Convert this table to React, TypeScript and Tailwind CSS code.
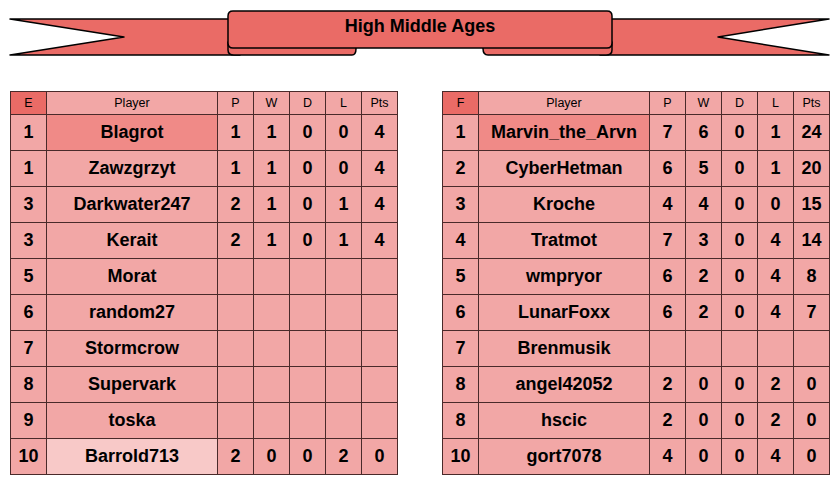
import React from "react";

type Row = {
  rank: string;
  name: string;
  stats: string[];
  tone?: "hot" | "pale";
};

const groupE: Row[] = [
  { rank: "1", name: "Blagrot", stats: ["1", "1", "0", "0", "4"], tone: "hot" },
  { rank: "1", name: "Zawzgrzyt", stats: ["1", "1", "0", "0", "4"] },
  { rank: "3", name: "Darkwater247", stats: ["2", "1", "0", "1", "4"] },
  { rank: "3", name: "Kerait", stats: ["2", "1", "0", "1", "4"] },
  { rank: "5", name: "Morat", stats: ["", "", "", "", ""] },
  { rank: "6", name: "random27", stats: ["", "", "", "", ""] },
  { rank: "7", name: "Stormcrow", stats: ["", "", "", "", ""] },
  { rank: "8", name: "Supervark", stats: ["", "", "", "", ""] },
  { rank: "9", name: "toska", stats: ["", "", "", "", ""] },
  { rank: "10", name: "Barrold713", stats: ["2", "0", "0", "2", "0"], tone: "pale" },
];

const groupF: Row[] = [
  { rank: "1", name: "Marvin_the_Arvn", stats: ["7", "6", "0", "1", "24"], tone: "hot" },
  { rank: "2", name: "CyberHetman", stats: ["6", "5", "0", "1", "20"] },
  { rank: "3", name: "Kroche", stats: ["4", "4", "0", "0", "15"] },
  { rank: "4", name: "Tratmot", stats: ["7", "3", "0", "4", "14"] },
  { rank: "5", name: "wmpryor", stats: ["6", "2", "0", "4", "8"] },
  { rank: "6", name: "LunarFoxx", stats: ["6", "2", "0", "4", "7"] },
  { rank: "7", name: "Brenmusik", stats: ["", "", "", "", ""] },
  { rank: "8", name: "angel42052", stats: ["2", "0", "0", "2", "0"] },
  { rank: "8", name: "hscic", stats: ["2", "0", "0", "2", "0"] },
  { rank: "10", name: "gort7078", stats: ["4", "0", "0", "4", "0"] },
];

const cell = "flex items-center justify-center border-r border-b border-[#4a2a2a]";

function GroupTable({ letter, rows }: { letter: string; rows: Row[] }) {
  return (
    <div className="grid w-[388px] grid-cols-[36px_171px_36px_36px_36px_36px_36px] border-l border-t border-[#4a2a2a] bg-[#f2a7a6]">
      {/* header */}
      <div className={`${cell} h-[23px] bg-[#ea6b66] text-[12.5px]`}>{letter}</div>
      {["Player", "P", "W", "D", "L", "Pts"].map((h) => (
        <div key={h} className={`${cell} h-[23px] text-[12.5px]`}>
          {h}
        </div>
      ))}

      {rows.map((r, i) => (
        <React.Fragment key={i}>
          <div className={`${cell} h-[36px] text-[18px] font-bold`}>{r.rank}</div>
          <div
            className={`${cell} h-[36px] text-[18px] font-bold ${
              r.tone === "hot" ? "bg-[#f08a87]" : r.tone === "pale" ? "bg-[#f8c9c8]" : ""
            }`}
          >
            {r.name}
          </div>
          {r.stats.map((s, j) => (
            <div key={j} className={`${cell} h-[36px] text-[18px] font-bold`}>
              {s}
            </div>
          ))}
        </React.Fragment>
      ))}
    </div>
  );
}

function Banner() {
  return (
    <div className="relative h-[91px]">
      <svg width="839" height="91" viewBox="0 0 839 91" className="block">
        <g fill="#ea6b66" stroke="#000" strokeWidth="1.5" strokeLinejoin="round">
          {/* tails */}
          <path d="M10 19 L240 19 L240 55 L10 55 L124 37 Z" />
          <path d="M600 19 L829 19 L718 37 L829 55 L600 55 Z" />
          {/* folds under the middle piece */}
          <path d="M228 42 L352 42 Q356 42 356 48.5 Q356 55 352 55 L234 55 Q228 55 228 50 Z" />
          <path d="M483 42 L612 42 L612 50 Q612 55 606 55 L488 55 Q483 55 483 48.5 Z" />
          {/* middle piece */}
          <path d="M233 11 L607 11 Q612 11 612 16 L612 43 Q612 48 607 48 L233 48 Q228 48 228 43 L228 16 Q228 11 233 11 Z" />
        </g>
      </svg>
      <div className="absolute left-[228px] top-[8px] flex h-[37px] w-[384px] items-center justify-center text-[18px] font-bold">
        High Middle Ages
      </div>
    </div>
  );
}

export default function App() {
  return (
    <div className="h-[484px] w-[839px] overflow-hidden bg-white font-['Liberation_Sans',Arial,sans-serif] text-black">
      <Banner />
      <div className="flex gap-[44px] pl-[10px]">
        <GroupTable letter="E" rows={groupE} />
        <GroupTable letter="F" rows={groupF} />
      </div>
    </div>
  );
}
